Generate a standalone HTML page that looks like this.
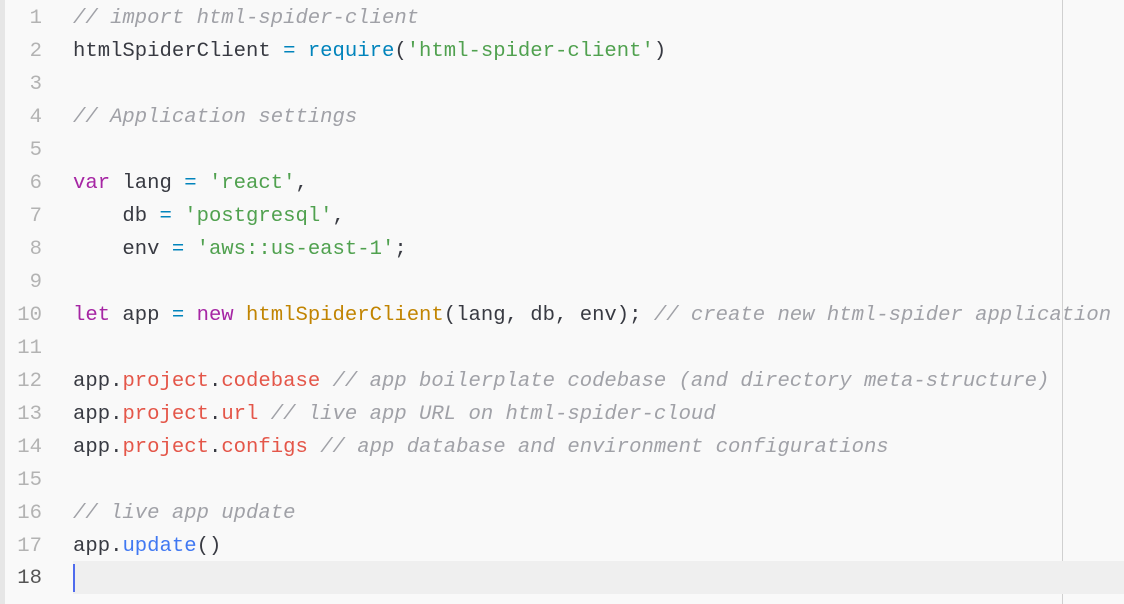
<!DOCTYPE html>
<html><head><style>
html,body{margin:0;padding:0;width:1124px;height:604px;background:#f9f9f9;overflow:hidden}
body{position:relative;font-family:"Liberation Mono",monospace;font-size:20.6px}
.lb{position:absolute;left:0;top:0;width:5px;height:604px;background:#e6e6e6}
.vr{position:absolute;left:1062px;top:0;width:1px;height:604px;background:#d0d0d0}
.act{position:absolute;left:73px;right:0;top:561px;height:33px;background:#efefef}
.cur{position:absolute;left:73px;top:564px;width:2px;height:28px;background:#4f6bed}
.l{position:absolute;left:0;height:33px;line-height:33px;white-space:pre;color:#383a42}
.n{display:inline-block;width:42px;text-align:right;color:#b3b3b3;margin-right:31px}
.c{color:#a0a1a7;font-style:italic}
.k{color:#a626a4}.o{color:#0184bc}.s{color:#50a14f}.p{color:#e45649}.t{color:#c18401}.f{color:#4078f2}
</style></head><body>
<div class="lb"></div><div class="vr"></div><div class="act"></div>
<div class="l" style="top:2px"><span class="n">1</span><span class="c">// import html-spider-client</span></div>
<div class="l" style="top:35px"><span class="n">2</span>htmlSpiderClient <span class="o">=</span> <span class="o">require</span>(<span class="s">'html-spider-client'</span>)</div>
<div class="l" style="top:68px"><span class="n">3</span></div>
<div class="l" style="top:101px"><span class="n">4</span><span class="c">// Application settings</span></div>
<div class="l" style="top:134px"><span class="n">5</span></div>
<div class="l" style="top:167px"><span class="n">6</span><span class="k">var</span> lang <span class="o">=</span> <span class="s">'react'</span>,</div>
<div class="l" style="top:200px"><span class="n">7</span>    db <span class="o">=</span> <span class="s">'postgresql'</span>,</div>
<div class="l" style="top:233px"><span class="n">8</span>    env <span class="o">=</span> <span class="s">'aws::us-east-1'</span>;</div>
<div class="l" style="top:266px"><span class="n">9</span></div>
<div class="l" style="top:299px"><span class="n">10</span><span class="k">let</span> app <span class="o">=</span> <span class="k">new</span> <span class="t">htmlSpiderClient</span>(lang, db, env); <span class="c">// create new html-spider application</span></div>
<div class="l" style="top:332px"><span class="n">11</span></div>
<div class="l" style="top:365px"><span class="n">12</span>app.<span class="p">project</span>.<span class="p">codebase</span> <span class="c">// app boilerplate codebase (and directory meta-structure)</span></div>
<div class="l" style="top:398px"><span class="n">13</span>app.<span class="p">project</span>.<span class="p">url</span> <span class="c">// live app URL on html-spider-cloud</span></div>
<div class="l" style="top:431px"><span class="n">14</span>app.<span class="p">project</span>.<span class="p">configs</span> <span class="c">// app database and environment configurations</span></div>
<div class="l" style="top:464px"><span class="n">15</span></div>
<div class="l" style="top:497px"><span class="n">16</span><span class="c">// live app update</span></div>
<div class="l" style="top:530px"><span class="n">17</span>app.<span class="f">update</span>()</div>
<div class="l" style="top:562px"><span class="n" style="color:#555">18</span></div>
<div class="cur"></div>
</body></html>
